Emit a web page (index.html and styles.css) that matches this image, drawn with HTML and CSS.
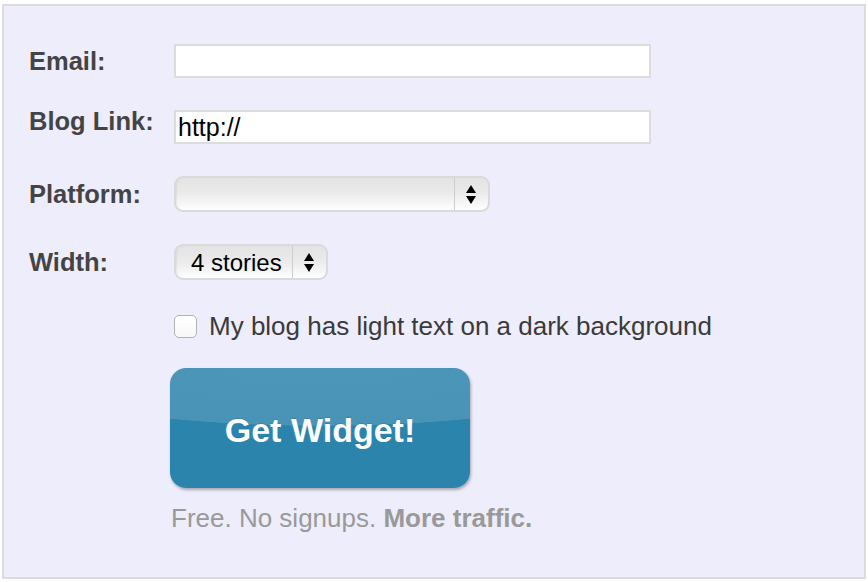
FILE: index.html
```html
<!DOCTYPE html>
<html lang="en">
<head>
    <meta charset="UTF-8">
    <title>Get Widget</title>
    <link rel="stylesheet" href="styles.css">
</head>
<body>
    <div class="panel">
        <form class="widget-form" onsubmit="return false;">
            <div class="row row-email">
                <label class="field-label" for="email">Email:</label>
                <input class="text-input" type="text" id="email">
            </div>
            <div class="row row-blog">
                <label class="field-label label-top" for="blogLink">Blog Link:</label>
                <input class="text-input" type="text" id="blogLink" value="http://">
            </div>
            <div class="row row-platform">
                <label class="field-label" for="platform">Platform:</label>
                <div class="select select-platform">
                    <select id="platform">
                        <option value=""></option>
                    </select>
                    <span class="select-arrows">
                        <svg width="10" height="19" viewBox="0 0 10 19"><polygon points="5,0 10,8 0,8"/><polygon points="0,11 10,11 5,19"/></svg>
                    </span>
                </div>
            </div>
            <div class="row row-width">
                <label class="field-label" for="widthSelect">Width:</label>
                <div class="select select-width">
                    <select id="widthSelect">
                        <option value="4">4 stories</option>
                    </select>
                    <span class="select-arrows">
                        <svg width="10" height="19" viewBox="0 0 10 19"><polygon points="5,0 10,8 0,8"/><polygon points="0,11 10,11 5,19"/></svg>
                    </span>
                </div>
            </div>
            <div class="row row-check">
                <span class="field-label"></span>
                <label class="check">
                    <input type="checkbox" id="darkBg">
                    <span>My blog has light text on a dark background</span>
                </label>
            </div>
            <div class="actions">
                <button class="get-widget" type="submit">Get Widget!</button>
                <p class="tagline">Free. No signups. <b>More traffic.</b></p>
            </div>
        </form>
    </div>
</body>
</html>
```

FILE: styles.css
```css
* {
    box-sizing: border-box;
}

html, body {
    margin: 0;
    padding: 0;
    background: #fff;
    font-family: "Liberation Sans", Arial, sans-serif;
}

.panel {
    width: 864px;
    height: 575px;
    margin: 4px 0 0 2px;
    border: 2px solid #dcdcdc;
    background: #eeedfc;
}

.widget-form {
    display: flex;
    flex-direction: column;
    padding: 38px 0 0 25px;
}

.row {
    display: grid;
    grid-template-columns: 145px auto;
    align-items: center;
    justify-content: start;
    margin-bottom: 32px;
}

.field-label {
    font-size: 25.5px;
    font-weight: bold;
    color: #444;
}

.label-top {
    align-self: start;
    margin-top: -3px;
}

.text-input {
    width: 477px;
    height: 34px;
    padding: 0 2px;
    border: 2px solid #dcdcdc;
    background: #fff;
    font-family: inherit;
    font-size: 25px;
    color: #000;
    outline: none;
}

/* mac style select box */
.select {
    display: inline-flex;
    height: 36px;
    border: 2px solid #dadada;
    border-radius: 9px;
    background: linear-gradient(to bottom, #e3e3e3 0%, #eaeaea 45%, #f6f6f6 80%, #fff 100%);
    box-shadow: inset 2px 0 2px -1px rgba(0, 0, 0, 0.06);
    overflow: hidden;
}

.select select {
    flex: 1;
    appearance: none;
    -webkit-appearance: none;
    border: none;
    background: transparent;
    padding: 0 0 0 15px;
    font-family: inherit;
    font-size: 24px;
    color: #000;
    outline: none;
}

.select-platform {
    width: 316px;
}

.select-width {
    width: 154px;
}

.select-arrows {
    display: flex;
    align-items: center;
    justify-content: center;
    width: 34px;
    border-left: 1px solid #cdcdcd;
    padding-right: 2px;
}

.select-arrows svg {
    fill: #000;
}

.row-check {
    margin-bottom: 28px;
}

.check {
    display: flex;
    align-items: center;
    gap: 12px;
    height: 28px;
    font-size: 26px;
    color: #3a3a3a;
}

.check input {
    appearance: none;
    -webkit-appearance: none;
    width: 23px;
    height: 23px;
    margin: 0;
    border: 1px solid #b2b2b2;
    border-radius: 5px;
    background: linear-gradient(#fff, #f7f7f7);
}

.actions {
    margin-left: 141px;
    display: flex;
    flex-direction: column;
    align-items: flex-start;
}

.get-widget {
    width: 300px;
    height: 120px;
    padding: 4px 0 0;
    border: none;
    border-radius: 16px;
    background: radial-gradient(ellipse 315px 58px at 50% 0, #4b96b9 0%, #4993b6 99%, #2b84ac 100%);
    box-shadow: 1px 2px 3px rgba(0, 0, 0, 0.3);
    color: #fdfdfd;
    font-family: inherit;
    font-size: 34px;
    font-weight: bold;
    text-shadow: 0 -1px 0 rgba(0, 0, 0, 0.12);
    cursor: pointer;
}

.tagline {
    margin: 15px 0 0 1px;
    font-size: 26px;
    line-height: 30px;
    color: #999;
}

.tagline b {
    color: #999;
}
```
